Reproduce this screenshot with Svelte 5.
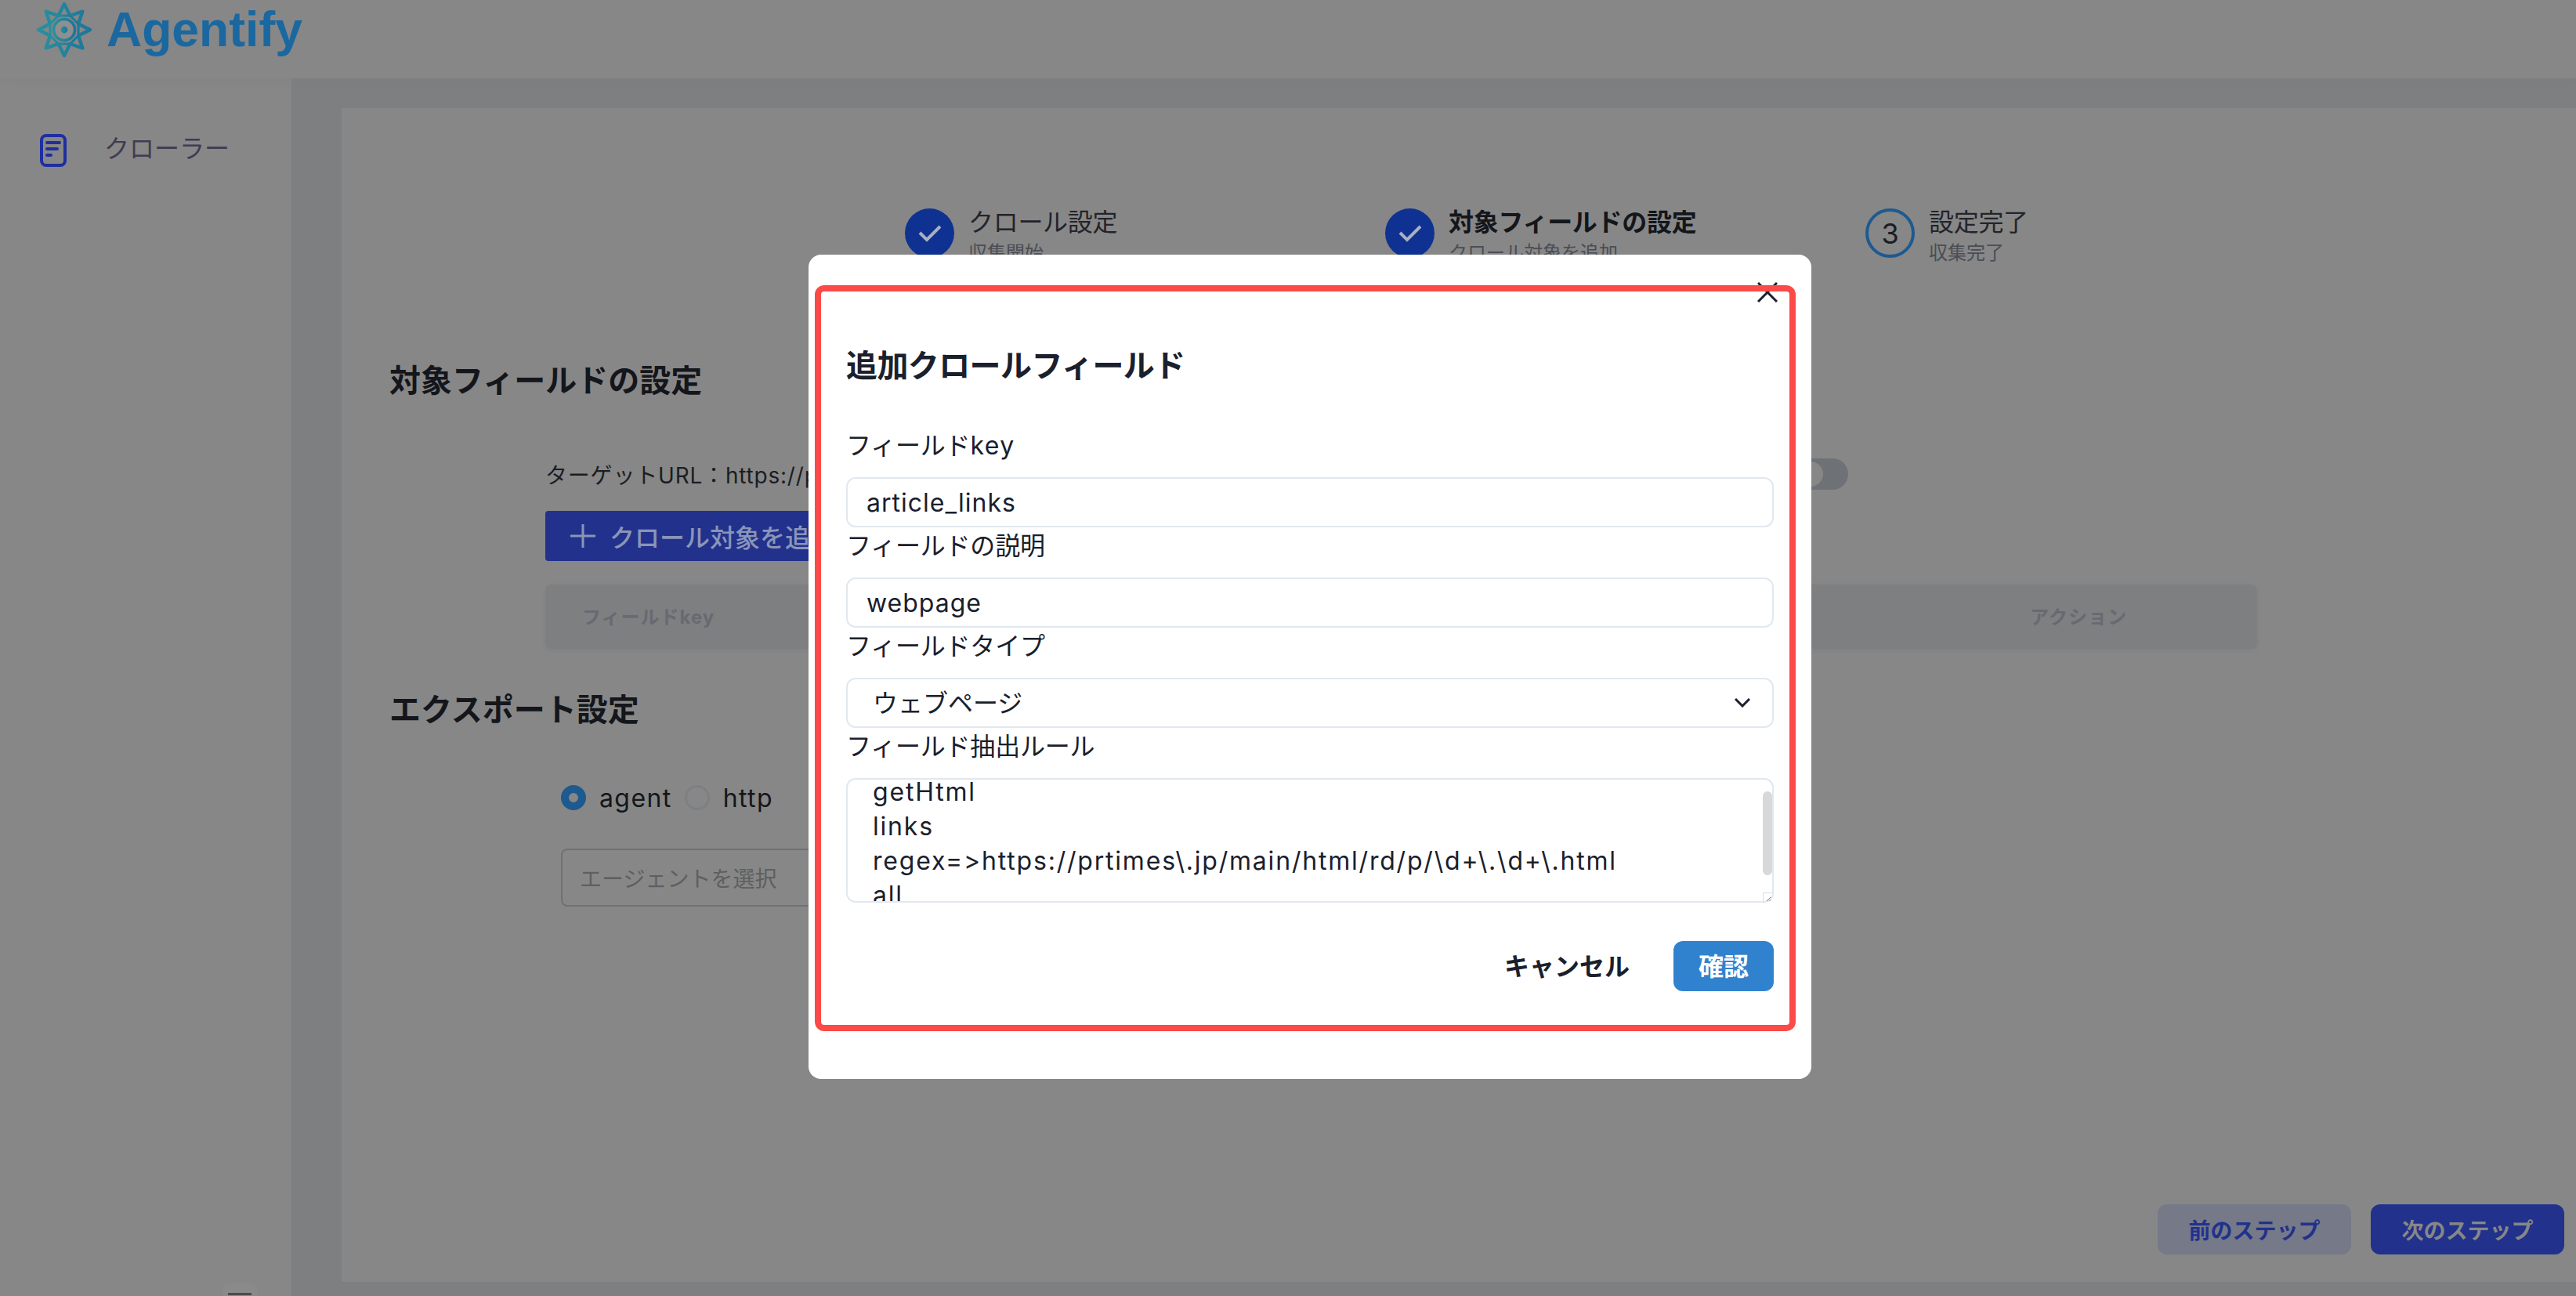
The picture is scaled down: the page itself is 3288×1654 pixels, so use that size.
<script>
	import { onMount } from 'svelte';

	let rulesEl;
	const rules = 'getHtml\nlinks\nregex=>https://prtimes\\.jp/main/html/rd/p/\\d+\\.\\d+\\.html\nall';

	// eight pointed star of the logo
	const starVertex = (i) => {
		const r = i % 2 === 0 ? 33 : 19.5;
		const a = (i * Math.PI) / 8 - Math.PI / 2;
		return `${(r * Math.cos(a)).toFixed(2)},${(r * Math.sin(a)).toFixed(2)}`;
	};
	const starPoints = Array.from({ length: 16 }, (_, i) => starVertex(i)).join(' ');
	const innerPoints = Array.from({ length: 8 }, (_, i) => starVertex(i * 2 + 1)).join(' ');

	const steps = [
		{ title: 'クロール設定', sub: '収集開始', done: true },
		{ title: '対象フィールドの設定', sub: 'クロール対象を追加', done: true, current: true },
		{ title: '設定完了', sub: '収集完了', done: false, num: 3 }
	];

	onMount(() => {
		rulesEl.scrollTop = 22;
	});
</script>

<div class="app">
	<header class="topbar">
		<svg class="logo" viewBox="-36 -36 72 72" width="72" height="72" aria-hidden="true">
			<defs>
				<linearGradient id="logoGrad" x1="0" y1="0" x2="1" y2="0">
					<stop offset="0" stop-color="#2a8f9e" />
					<stop offset="1" stop-color="#1c769a" />
				</linearGradient>
			</defs>
			<polygon points={starPoints} fill="none" stroke="url(#logoGrad)" stroke-width="4.4" stroke-linejoin="round" />
			<polygon points={innerPoints} fill="none" stroke="url(#logoGrad)" stroke-width="3" stroke-linejoin="round" />
			<circle r="13.5" fill="#8f8f8f" stroke="url(#logoGrad)" stroke-width="3.6" />
			<circle r="4.4" fill="url(#logoGrad)" />
		</svg>
		<span class="brand">Agentify</span>
	</header>

	<div class="body">
		<aside class="sidebar">
			<div class="nav-item">
				<svg width="34" height="42" viewBox="0 0 34 42" fill="none" stroke="#1f2ea0" stroke-width="4" stroke-linecap="round" aria-hidden="true">
					<rect x="2" y="2" width="30" height="38" rx="6" />
					<path d="M9 11h16M9 19h13M9 27h5" />
				</svg>
				<span>クローラー</span>
			</div>
			<div class="collapse"><span></span></div>
		</aside>

		<main class="main">
			<div class="card">
				<div class="stepper">
					{#each steps as step}
						<div class="step" class:current={step.current}>
							{#if step.done}
								<span class="step-icon done">
									<svg width="34" height="26" viewBox="0 0 34 26" fill="none" stroke="#aab0bf" stroke-width="4" aria-hidden="true">
										<path d="M4 12l9 9L30 4" />
									</svg>
								</span>
							{:else}
								<span class="step-icon todo">{step.num}</span>
							{/if}
							<div class="step-text">
								<div class="step-title">{step.title}</div>
								<div class="step-sub">{step.sub}</div>
							</div>
						</div>
					{/each}
				</div>

				<section class="section">
					<h2>対象フィールドの設定</h2>
					<div class="fields">
						<div class="url-row">
							<span>ターゲットURL：https://prtimes.jp/main/html/searchrlp/</span>
							<span class="switch"><span class="knob"></span></span>
						</div>
						<button class="add-btn">
							<svg width="32" height="32" viewBox="0 0 32 32" stroke="#8a95b8" stroke-width="3" aria-hidden="true">
								<path d="M16 1v30M0 16h32" />
							</svg>
							クロール対象を追加
						</button>
						<div class="table-head">
							<span>フィールドkey</span>
							<span>アクション</span>
						</div>
					</div>

					<h2 class="export-title">エクスポート設定</h2>
					<div class="export">
						<div class="radios">
							<span class="radio on"></span><span class="radio-label">agent</span>
							<span class="radio"></span><span class="radio-label">http</span>
						</div>
						<div class="agent-select">エージェントを選択</div>
					</div>
				</section>

				<div class="actions">
					<button class="step-btn prev">前のステップ</button>
					<button class="step-btn next">次のステップ</button>
				</div>
			</div>
		</main>
	</div>

	<div class="modal">
		<button class="close" aria-label="close">
			<svg width="26" height="26" viewBox="0 0 26 26" stroke="#1a202c" stroke-width="3" aria-hidden="true">
				<path d="M1 1l24 24M25 1L1 25" />
			</svg>
		</button>
		<h3>追加クロールフィールド</h3>

		<label for="f-key">フィールド<span class="latin">key</span></label>
		<input id="f-key" value="article_links" />

		<label for="f-desc">フィールドの説明</label>
		<input id="f-desc" value="webpage" />

		<label for="f-type">フィールドタイプ</label>
		<div class="select-wrap">
			<select id="f-type">
				<option>ウェブページ</option>
			</select>
			<svg class="chevron" width="20" height="12" viewBox="0 0 20 12" fill="none" stroke="#1a202c" stroke-width="3" aria-hidden="true">
				<path d="M1 1l9 9 9-9" />
			</svg>
		</div>

		<label for="f-rule">フィールド抽出ルール</label>
		<div class="rule-wrap">
			<textarea id="f-rule" bind:this={rulesEl} value={rules}></textarea>
			<span class="thumb"></span>
			<svg class="grip" width="12" height="13" viewBox="0 0 12 13" fill="none" aria-hidden="true">
				<path d="M.5 13V.5H12" stroke="#dcdcdc" />
				<path d="M5 11l5-5M8.500 11l1.500-1.500" stroke="#777" />
			</svg>
		</div>

		<div class="modal-footer">
			<button class="cancel">キャンセル</button>
			<button class="confirm">確認</button>
		</div>

		<div class="annotation"></div>
	</div>
</div>

<style>
	:global(body) {
		margin: 0;
		background: #878787;
	}

	.app {
		width: 3288px;
		height: 1654px;
		overflow: hidden;
		position: relative;
		display: flex;
		flex-direction: column;
		font-family: Inter, 'Noto Sans CJK JP', sans-serif;
		font-variant-ligatures: none;
		font-feature-settings: 'calt' 0;
		color: #1a202c;
	}

	button {
		font-family: inherit;
		border: none;
		cursor: pointer;
	}

	.topbar {
		height: 100px;
		flex: none;
		box-sizing: border-box;
		padding: 2px 0 0 46px;
		display: flex;
		align-items: flex-start;
		gap: 18px;
		background: #878787;
		position: relative;
		box-shadow: 0 4px 20px rgba(0, 0, 0, 0.02);
	}

	.brand {
		font-family: 'Liberation Sans', Arial, sans-serif;
		font-weight: 700;
		font-size: 62.500px;
		line-height: 72px;
		margin-top: -1px;
		color: #1a689f;
	}

	.body {
		flex: 1;
		display: flex;
		min-height: 0;
	}

	.sidebar {
		width: 372px;
		flex: none;
		display: flex;
		flex-direction: column;
		background: #878787;
		overflow: hidden;
	}

	.nav-item {
		display: flex;
		align-items: center;
		gap: 48px;
		margin: 71px 0 0 51px;
		font-size: 32px;
		color: #3f3c52;
	}

	.nav-item span {
		line-height: 38px;
		padding-bottom: 4px;
	}

	.collapse {
		margin: auto 0 -24px 284px;
		width: 44px;
		height: 40px;
		border-radius: 8px;
		background: #8a8a8a;
		box-sizing: border-box;
		padding: 12px 7px 0;
	}

	.collapse span {
		display: block;
		height: 3px;
		background: #4a4c50;
	}

	.main {
		flex: 1;
		min-width: 0;
		box-sizing: border-box;
		padding: 38px 0 18px 64px;
		background: #7e7f80;
	}

	.card {
		height: 100%;
		box-sizing: border-box;
		padding: 128px 15px 35px 0;
		display: flex;
		flex-direction: column;
		background: #878787;
	}

	.stepper {
		display: grid;
		grid-template-columns: repeat(3, 613px);
		margin-left: 719px;
		height: 120px;
	}

	.step {
		display: flex;
		gap: 18px;
	}

	.step-icon {
		width: 63px;
		height: 63px;
		flex: none;
		box-sizing: border-box;
		border-radius: 50%;
		display: flex;
		align-items: center;
		justify-content: center;
	}

	.step-icon.done {
		background: #0f3191;
	}

	.step-icon.todo {
		border: 4px solid #1d5a90;
		font-size: 36px;
		color: #1a1d24;
	}

	.step-title {
		font-size: 32px;
		line-height: 36px;
		letter-spacing: -0.3px;
		color: #22242a;
	}

	.step.current .step-title {
		font-weight: 700;
		color: #14161b;
	}

	.step-sub {
		margin-top: 6px;
		font-size: 24px;
		line-height: 30px;
		color: #4a4d55;
	}

	.section {
		padding-left: 61px;
		margin-top: 70px;
	}

	h2 {
		margin: 0;
		font-size: 40px;
		line-height: 60px;
		font-weight: 700;
		color: #14161b;
	}

	.fields {
		margin: 69px 0 0 199px;
		width: 2185px;
	}

	.url-row {
		width: 1663px;
		height: 40px;
		display: flex;
		justify-content: space-between;
		align-items: center;
		font-size: 28px;
		letter-spacing: 0.8px;
		color: #1b1d22;
		white-space: nowrap;
	}

	.switch {
		width: 68px;
		height: 40px;
		flex: none;
		box-sizing: border-box;
		padding: 4px;
		border-radius: 20px;
		background: #6e7276;
	}

	.knob {
		display: block;
		width: 32px;
		height: 32px;
		border-radius: 50%;
		background: #878787;
	}

	.add-btn {
		margin-top: 27px;
		height: 64px;
		padding: 0 32px;
		display: flex;
		align-items: center;
		gap: 18px;
		border-radius: 4px;
		background: #22318c;
		color: #8a95b8;
		font-size: 32px;
		font-weight: 500;
	}

	.table-head {
		margin-top: 30px;
		height: 82px;
		box-sizing: border-box;
		padding: 0 166px 4px 47px;
		display: flex;
		justify-content: space-between;
		align-items: center;
		border-radius: 8px;
		background: #7e7f80;
		box-shadow: 0 2px 6px rgba(0, 0, 0, 0.05);
		font-size: 24px;
		font-weight: 700;
		color: #666a72;
		letter-spacing: 1px;
	}

	.export-title {
		margin-top: 48px;
	}

	.export {
		margin: 62px 0 0 219px;
	}

	.radios {
		height: 40px;
		display: flex;
		align-items: center;
		font-size: 32px;
		letter-spacing: 1.400px;
		color: #14161b;
	}

	.radio {
		width: 32px;
		height: 32px;
		box-sizing: border-box;
		border-radius: 50%;
		border: 3px solid #7c8085;
	}

	.radio.on {
		border: 10px solid #1d5a90;
		background: #878787;
	}

	.radio-label {
		margin: 0 16px 0 17px;
	}

	.agent-select {
		margin-top: 45px;
		width: 900px;
		height: 74px;
		box-sizing: border-box;
		padding-left: 22px;
		display: flex;
		align-items: center;
		border: 2px solid #6f7173;
		border-radius: 8px;
		font-size: 28px;
		color: #5e5f60;
	}

	.actions {
		margin-top: auto;
		display: flex;
		justify-content: flex-end;
		gap: 25px;
	}

	.step-btn {
		width: 247px;
		height: 64px;
		border-radius: 12px;
		font-size: 28px;
		font-weight: 700;
	}

	.step-btn.prev {
		background: #757988;
		color: #22318c;
	}

	.step-btn.next {
		background: #22318c;
		color: #878787;
	}

	.modal {
		position: absolute;
		left: 1032px;
		top: 325px;
		width: 1280px;
		height: 1052px;
		box-sizing: border-box;
		padding: 112px 48px 0;
		background: #fff;
		border-radius: 16px;
	}

	.close {
		position: absolute;
		top: 35px;
		right: 43px;
		padding: 0;
		background: none;
		line-height: 0;
	}

	h3 {
		margin: 0 0 48px;
		font-size: 40px;
		line-height: 60px;
		font-weight: 700;
		letter-spacing: -0.6px;
		color: #1a202c;
	}

	label {
		display: block;
		height: 48px;
		margin-bottom: 16px;
		font-size: 32px;
		line-height: 48px;
		letter-spacing: -0.2px;
	}

	.latin {
		letter-spacing: 1.500px;
	}

	input,
	select,
	textarea {
		display: block;
		width: 100%;
		box-sizing: border-box;
		border: 2px solid #e2e8f0;
		border-radius: 12px;
		background: #fff;
		font-family: inherit;
		font-size: 32px;
		font-variant-ligatures: none;
		font-feature-settings: 'calt' 0;
		color: #1a202c;
		outline: none;
	}

	input,
	select {
		height: 64px;
		padding: 0 24px;
	}

	input {
		letter-spacing: 1px;
	}

	.select-wrap {
		position: relative;
	}

	select {
		appearance: none;
		padding-left: 32px;
	}

	.chevron {
		position: absolute;
		right: 30px;
		top: 26px;
	}

	.rule-wrap {
		position: relative;
	}

	textarea {
		height: 159px;
		padding: 16px 32px;
		line-height: 44px;
		letter-spacing: 1.800px;
		resize: none;
		overflow: hidden;
		white-space: pre;
	}

	.thumb {
		position: absolute;
		right: 2px;
		top: 17px;
		width: 12px;
		height: 107px;
		border-radius: 6px;
		background: #d8d8d8;
	}

	.grip {
		position: absolute;
		right: 2px;
		bottom: 0;
	}

	.modal-footer {
		margin-top: 49px;
		display: flex;
		justify-content: flex-end;
		gap: 24px;
	}

	.modal-footer button {
		height: 64px;
		padding-bottom: 6px;
		border-radius: 12px;
		font-size: 32px;
		font-weight: 600;
	}

	.modal-footer .cancel {
		padding-left: 32px;
		padding-right: 32px;
		background: transparent;
		color: #1a202c;
	}

	.confirm {
		width: 128px;
		background: #3182ce;
		color: #fff;
	}

	.annotation {
		position: absolute;
		left: 8px;
		top: 39px;
		width: 1252px;
		height: 952px;
		box-sizing: border-box;
		border: 8px solid #fb4a47;
		border-radius: 12px;
		pointer-events: none;
	}
</style>
